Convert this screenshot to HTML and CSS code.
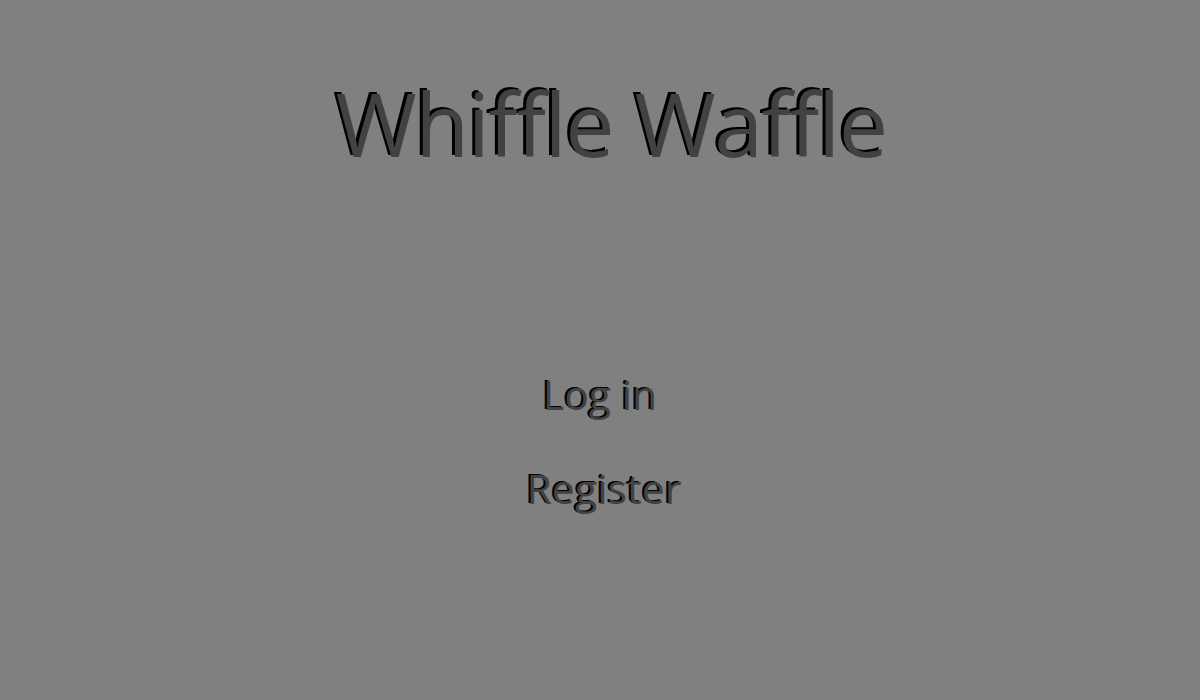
FILE: index.html
```html
<!DOCTYPE html>
<html>
<head>
<meta charset="utf-8">
<link rel="stylesheet" href="styles.css">
</head>
<body>
<div class="page">
  <h1 class="title">Whiffle Waffle</h1>
  <nav class="menu">
    <a class="menu-link" href="#">Log in</a>
    <a class="menu-link menu-link-register" href="#">Register</a>
  </nav>
</div>
</body>
</html>
```
FILE: styles.css
```css
html, body {
  margin: 0;
  padding: 0;
  background: #808080;
  height: 100%;
}
.page {
  font-family: "Open Sans", sans-serif;
  display: flex;
  flex-direction: column;
  align-items: center;
  color: #424242;
}
.title {
  margin: 0;
  padding-top: 71px;
  padding-left: 22px;
  font-size: 88px;
  font-weight: 400;
  line-height: 1.2;
  letter-spacing: -1.5px;
  text-shadow: -3px -2px 0 #000;
}
.menu {
  display: flex;
  flex-direction: column;
  align-items: center;
  margin-top: 185px;
  gap: 29px;
}
.menu-link {
  color: #424242;
  text-decoration: none;
  font-size: 41px;
  line-height: 1.6;
  text-shadow: -2px -1px 0 #000;
}
.menu-link-register {
  padding-left: 8px;
}
```
